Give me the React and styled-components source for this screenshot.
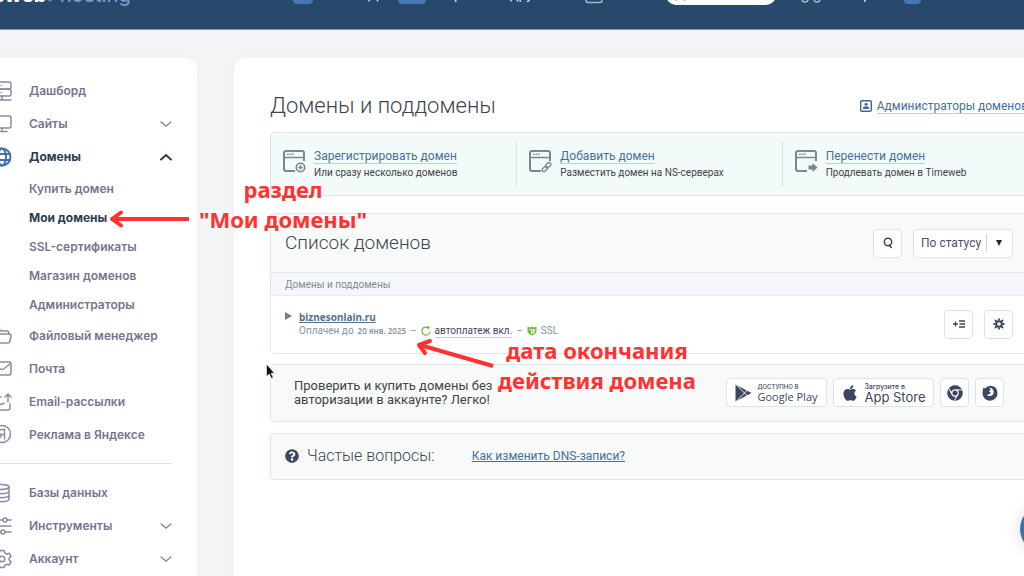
import styled, { createGlobalStyle } from "styled-components"
import { FaApple, FaChrome, FaQuestionCircle } from "react-icons/fa"

const GlobalStyle = createGlobalStyle`
  * {
    box-sizing: border-box;
  }
  body {
    margin: 0;
    overflow: hidden;
    background: #f3f5f7;
    font-family: Roboto, "Liberation Sans", sans-serif;
    color: #3f4347;
  }
`

const Page = styled.div`
  position: relative;
  display: flex;
  flex-direction: column;
  height: 100vh;
  overflow: hidden;
`

/* header */

const Header = styled.header`
  flex: none;
  height: 30px;
  display: flex;
  align-items: flex-end;
  overflow: hidden;
  background: #28496c;
  border-bottom: 1px solid #8093ab;
  color: #dfe7ef;
  font-size: 14px;
  line-height: 16px;
`
const Logo = styled.a`
  width: 288px;
  margin: 0 0 22px -39px;
  flex: none;
  font-family: Inter, sans-serif;
  font-size: 20px;
  font-weight: 800;
  line-height: 24px;
  color: #fff;
  text-decoration: none;
  span {
    font-weight: 500;
    color: #6f9ccb;
  }
`
const HeaderGroup = styled.div`
  display: flex;
  align-items: flex-end;
  flex: none;
  width: ${props => props.$width}px;
  padding-bottom: 25px;
`
const HeaderText = styled.span`
  padding: 0 0 2px ${props => props.$indent || 0}px;
`
const Count = styled.span`
  width: ${props => props.$width}px;
  height: 20px;
  border-radius: 4px;
  background: #4578b4;
`
const Balance = styled.span`
  width: 110px;
  height: 24px;
  padding: 4px 9px;
  margin-bottom: -1px;
  border-radius: 10px;
  background: #fff;
  color: #28496c;
`

/* sidebar */

const Layout = styled.div`
  flex: 1;
  min-height: 0;
  display: flex;
  gap: 37px;
  padding-top: 28px;
`
const Sidebar = styled.nav`
  flex: none;
  width: 237px;
  margin-left: -40px;
  padding: 16px 25px 0 32px;
  border-radius: 12px 12px 0 0;
  background: #fff;
  box-shadow: 0 0 12px #eceff2;
`
const MenuList = styled.ul`
  margin: 0;
  padding: 0;
  list-style: none;
`
const SubList = styled(MenuList)`
  padding: 1px 0 0 37px;
`
const MenuLink = styled.a`
  display: flex;
  align-items: center;
  gap: 17px;
  height: ${props => props.$sub ? 29 : 33}px;
  font-family: Inter, sans-serif;
  font-size: 12px;
  font-weight: ${props => props.$active ? 700 : 600};
  line-height: 16px;
  white-space: nowrap;
  text-decoration: none;
  color: ${props => props.$active ? "#2b3d4f" : "#74768f"};
  span {
    flex: 1;
  }
`
const MenuIcon = styled.svg`
  flex: none;
  width: 20px;
  height: 20px;
  fill: none;
  stroke: ${props => props.$active ? "#3f72ad" : "#8b8ca3"};
  stroke-width: ${props => props.$active ? 2 : 1.5};
  stroke-linecap: round;
  stroke-linejoin: round;
`
const Chevron = styled.svg`
  width: 12px;
  height: 8px;
  fill: none;
  stroke: ${props => props.$active ? "#2b3d4f" : "#8b8ca3"};
  stroke-width: ${props => props.$active ? 2 : 1.5};
  stroke-linecap: round;
`
const Divider = styled.hr`
  height: 1px;
  margin: 12px 0;
  border: 0;
  background: #e0e2e8;
`

/* content */

const Main = styled.main`
  flex: 1;
  min-width: 0;
  margin-right: -40px;
  padding: 33px 36px 0;
  border-radius: 12px 12px 0 0;
  background: #fff;
  box-shadow: 0 0 12px #eceff2;
`
const TitleRow = styled.div`
  display: flex;
  align-items: center;
  justify-content: space-between;
  height: 30px;
  margin-bottom: 11px;
`
const Title = styled.h1`
  margin: 0;
  font-size: 22px;
  font-weight: 300;
  line-height: 30px;
  color: #3c4450;
`
const TextLink = styled.a`
  font-size: 12px;
  line-height: 14px;
  white-space: nowrap;
  text-decoration: none;
  color: #457099;
  border-bottom: 1px solid #b9d0e2;
`
const AdminLink = styled.div`
  display: flex;
  align-items: center;
  gap: 5px;
`
const Box = styled.section`
  border: 1px solid #dde7e9;
  border-radius: 4px;
  background: #f8fafa;
`
const Actions = styled(Box)`
  display: grid;
  grid-template-columns: 246fr 266fr 246fr;
  padding: 9px 0;
  margin-bottom: 17px;
  background: #f3fafa;
`
const Action = styled.div`
  display: flex;
  gap: 8px;
  height: 44px;
  padding: 7px 12px;
  border-left: ${props => props.$first ? 0 : "1px solid #d9e2e4"};
  svg {
    flex: none;
    margin-top: 1px;
  }
`
const ActionText = styled.div`
  display: flex;
  flex-direction: column;
  align-items: flex-start;
  gap: 2px;
`
const Note = styled.span`
  font-size: 10px;
  line-height: 14px;
  white-space: nowrap;
`
const ListBox = styled(Box)`
  margin-bottom: 10px;
`
const ListHead = styled.div`
  display: flex;
  align-items: center;
  gap: 11px;
  height: 58px;
  padding: 0 14px;
`
const SubTitle = styled.h2`
  flex: ${props => props.$grow ? 1 : "none"};
  margin: 0;
  font-size: ${props => props.$size}px;
  font-weight: 300;
  line-height: 24px;
  color: #3c4450;
`
const SquareButton = styled.button`
  display: inline-flex;
  align-items: center;
  justify-content: center;
  width: 29px;
  height: 29px;
  padding: 0;
  border: 1px solid #dbe5e8;
  border-radius: 4px;
  background: #fff;
  color: #3d4660;
`
const Filter = styled.div`
  display: flex;
  align-items: center;
  width: 100px;
  height: 29px;
  padding: 0 8px 0 7px;
  border: 1px solid #dbe5e8;
  border-radius: 4px;
  background: #fff;
  svg {
    margin-left: auto;
    margin-right: 2px;
  }
`
const FilterSelect = styled.select`
  width: 66px;
  height: 18px;
  padding: 0;
  border: 0;
  border-right: 1px solid #cdd8dc;
  appearance: none;
  background: none;
  font-family: inherit;
  font-size: 12px;
  color: #4a5166;
`
const Table = styled.table`
  width: 100%;
  border-collapse: collapse;
  th {
    height: 23px;
    padding: 0 14px;
    border-top: 1px solid #dde7e9;
    border-bottom: 1px solid #e8ecf2;
    background: #f6f7fc;
    font-size: 10px;
    font-weight: 400;
    text-align: left;
    color: #7c8b97;
  }
  td {
    height: 57px;
    padding: 0 14px;
    background: #fff;
  }
`
const Domain = styled.div`
  display: flex;
  align-items: flex-start;
  gap: 7px;
`
const Expand = styled.button`
  display: flex;
  padding: 2px 0;
  border: 0;
  background: none;
`
const DomainName = styled.a`
  display: block;
  width: fit-content;
  font-family: "Noto Sans", sans-serif;
  font-size: 10px;
  font-weight: 700;
  line-height: 14px;
  color: #54708c;
`
const Status = styled.div`
  display: flex;
  align-items: center;
  gap: 4px;
  font-size: 10px;
  line-height: 14px;
  white-space: nowrap;
  color: #8496a0;
  b {
    font-family: "Noto Sans", sans-serif;
    font-size: 8px;
    font-weight: 600;
  }
`
const AutoPay = styled.a`
  line-height: 12px;
  text-decoration: none;
  color: #3f4660;
  border-bottom: 1px solid #c3d2dc;
`
const RowButtons = styled.div`
  display: flex;
  justify-content: flex-end;
  gap: 11px;
`
const Promo = styled(Box)`
  display: flex;
  align-items: center;
  justify-content: space-between;
  height: 58px;
  padding: 0 23px;
  margin-bottom: 11px;
`
const PromoText = styled.p`
  margin: 0;
  font-size: 13px;
  line-height: 14px;
`
const Stores = styled.div`
  display: flex;
  gap: 6px;
`
const StoreButton = styled(SquareButton)`
  width: 101px;
  gap: 5px;
  font-family: ${props => props.$font};
  font-size: ${props => props.$size}px;
  font-weight: ${props => props.$weight};
  line-height: 12px;
  text-align: left;
  white-space: nowrap;
  small {
    display: block;
    font-family: Inter, sans-serif;
    font-size: ${props => props.$small}px;
    font-weight: 500;
    line-height: 8px;
  }
`
const Faq = styled(Box)`
  display: flex;
  align-items: center;
  height: 47px;
  padding: 0 14px;
  color: #3d4660;
  h2 {
    margin: 0 37px 0 8px;
  }
  a {
    border: 0;
    text-decoration: underline;
  }
`
const Chat = styled.button`
  position: absolute;
  top: 505px;
  right: -44px;
  width: 48px;
  height: 48px;
  border: 0;
  border-radius: 50%;
  background: #3f72ad;
  box-shadow: 0 0 16px #d5dbe2;
`

/* notes and arrows drawn over the page */

const Callout = styled.div`
  position: absolute;
  top: ${props => props.$top}px;
  left: ${props => props.$left}px;
  transform: translateX(-50%);
  font-family: "Noto Sans", sans-serif;
  font-size: 22px;
  font-weight: 700;
  line-height: 30px;
  text-align: center;
  white-space: nowrap;
  color: #ff3131;
`
const Marks = styled.svg`
  position: absolute;
  top: 0;
  left: 0;
  pointer-events: none;
`

const icons = {
  server: <><rect x="1" y="1" width="18" height="7" rx="2" /><rect x="1" y="8" width="18" height="7" rx="2" /><path d="M10 15v4M2 19h17M5 4.500h.1M9 4.500h.1M5 11.500h.1M9 11.500h.1" /></>,
  monitor: <><rect x="1" y="2" width="18" height="12" rx="2" /><path d="M10 14v3.500M5 17.500h10" /></>,
  globe: <><circle cx="10" cy="10" r="8.500" /><ellipse cx="10" cy="10" rx="4" ry="8.500" /><path d="M2 7h16M2 13h16" /></>,
  folder: <><path d="M2 8V5q0-2 2-2h3l2 2h6q2 0 2 3" /><path d="M2 8h15q2.500 0 2 2l-1 5q-.4 2-2 2H4q-2 0-2-2z" /></>,
  mail: <><rect x="1" y="3" width="18" height="13" rx="2" /><path d="m2 5 6.500 5q1.500 1 3 0L18 5" /></>,
  send: <><path d="M16 10V2M13 5l3-3 3 3M18 12v4q0 2-2 2H3q-2 0-2-2V7q0-2 2-2h6M4 9l4 3q2 1 4-1" /></>,
  ad: <><circle cx="10" cy="9" r="8.500" /><path d="M12.500 14V4.500H10q-3 0-3 2.500t3 2.500h2.500M10 9.500 7 14" /></>,
  base: <><ellipse cx="9" cy="4" rx="8" ry="2.500" /><path d="M1 4v12c0 3.500 16 3.500 16 0V4M1 8c0 3.500 16 3.500 16 0M1 12c0 3.500 16 3.500 16 0" /></>,
  tools: <><path d="M1 4h10M15 4h4M1 10h18M1 16h8M13 16h6" /><circle cx="13" cy="4" r="2" /><circle cx="11" cy="16" r="2" /></>,
  gear: <><circle cx="10" cy="10" r="2.800" /><path d="m8 1.500-.7 2.300-2 1.200-2.500-.7-1.800 3 1.800 1.800v2L1 13l1.800 3 2.500-.7 2 1.200.7 2h4l.7-2 2-1.200 2.500.7 1.800-3-1.800-1.900v-2L19 7.300l-1.800-3-2.500.7-2-1.200-.7-2.300z" /></>,
}

const topMenu = [
  { icon: "server", label: "Дашборд" },
  { icon: "monitor", label: "Сайты", arrow: true },
  {
    icon: "globe", label: "Домены", arrow: true, active: true,
    sub: ["Купить домен", "Мои домены", "SSL-сертификаты", "Магазин доменов", "Администраторы"],
  },
  { icon: "folder", label: "Файловый менеджер" },
  { icon: "mail", label: "Почта" },
  { icon: "send", label: "Email-рассылки" },
  { icon: "ad", label: "Реклама в Яндексе" },
]

const bottomMenu = [
  { icon: "base", label: "Базы данных" },
  { icon: "tools", label: "Инструменты", arrow: true },
  { icon: "gear", label: "Аккаунт", arrow: true },
]

const actions = [
  { title: "Зарегистрировать домен", note: "Или сразу несколько доменов", mark: "plus" },
  { title: "Добавить домен", note: "Разместить домен на NS-серверах", mark: "link" },
  { title: "Перенести домен", note: "Продлевать домен в Timeweb", mark: "arrow" },
]

function Menu({ items }) {
  return (
    <MenuList>
      {items.map(item => (
        <li key={item.label}>
          <MenuLink href="#" $active={item.active}>
            <MenuIcon viewBox="0 0 20 20" $active={item.active}>{icons[item.icon]}</MenuIcon>
            <span>{item.label}</span>
            {item.arrow && (
              <Chevron viewBox="0 0 12 8" $active={item.active}>
                <path d={item.active ? "M1 6.500 6 2l5 4.500" : "M1 2l5 4 5-4"} />
              </Chevron>
            )}
          </MenuLink>
          {item.sub && (
            <SubList>
              {item.sub.map(label => (
                <li key={label}>
                  <MenuLink href="#" $sub $active={label === "Мои домены"}>{label}</MenuLink>
                </li>
              ))}
            </SubList>
          )}
        </li>
      ))}
    </MenuList>
  )
}

function WindowIcon({ mark }) {
  return (
    <svg width="23" height="23" viewBox="0 0 23 23" fill="none" stroke="#748a92" strokeWidth="2">
      <path d="M12 21H3q-2 0-2-2V3q0-2 2-2h16q2 0 2 2v8" />
      <path d="M1 7.500h20" strokeWidth="1.500" />
      <path d="M4 4.300h7" strokeWidth="1.500" strokeDasharray="1.500 1" />
      {mark === "plus" && <><circle cx="17.500" cy="17.500" r="4.200" strokeWidth="1.600" /><path d="M17.500 15.300v4.400M15.300 17.500h4.400" strokeWidth="1.600" /></>}
      {mark === "link" && <g strokeWidth="1.300"><rect x="16" y="13.500" width="6" height="3.500" rx="1.750" transform="rotate(-45 19 15)" /><rect x="13" y="17" width="6" height="3.500" rx="1.750" transform="rotate(-45 16 19)" /></g>}
      {mark === "arrow" && <path d="M13.500 15.500h4V13l5 4.500-5 4.500v-2.500h-4z" fill="#748a92" stroke="none" />}
    </svg>
  )
}

export default function App() {
  return (
    <>
      <GlobalStyle />
      <Page>
        <Header>
          <Logo href="#">timeweb<span>&gt;hosting</span></Logo>
          <HeaderGroup $width={149}>
            <HeaderText $indent={44} />
            <Count $width={20} />
            <HeaderText $indent={55}>Дни</HeaderText>
          </HeaderGroup>
          <HeaderGroup $width={187}>
            <Count $width={28} />
            <HeaderText $indent={18}>Пригласи друга</HeaderText>
          </HeaderGroup>
          <HeaderGroup $width={81}>
            <svg width="18" height="16" viewBox="0 0 18 16" fill="none" stroke="#a9b9ca" strokeWidth="1.500">
              <rect x="1" y="1" width="16" height="13.500" rx="2" />
            </svg>
          </HeaderGroup>
          <HeaderGroup $width={135}>
            <Balance>Добавить</Balance>
          </HeaderGroup>
          <HeaderGroup $width={103}>
            <svg width="20" height="16" viewBox="0 0 20 16" fill="none" stroke="#a9b9ca" strokeWidth="1.500">
              <circle cx="4" cy="11" r="3" />
              <circle cx="16" cy="11" r="3" />
            </svg>
            <HeaderText $indent={22}>Мир</HeaderText>
          </HeaderGroup>
          <HeaderGroup $width={40}>
            <Count $width={17} />
          </HeaderGroup>
        </Header>

        <Layout>
          <Sidebar>
            <Menu items={topMenu} />
            <Divider />
            <Menu items={bottomMenu} />
          </Sidebar>

          <Main>
            <TitleRow>
              <Title>Домены и поддомены</Title>
              <AdminLink>
                <svg width="12" height="12" viewBox="0 0 12 12" fill="none" stroke="#3f6a94" strokeWidth="1.400">
                  <rect x=".7" y=".7" width="10.600" height="10.600" rx="1" />
                  <circle cx="6" cy="4.300" r="1.500" fill="#3f6a94" stroke="none" />
                  <path d="M3 9V8q0-1.800 3-1.800T9 8v1z" fill="#3f6a94" stroke="none" />
                </svg>
                <TextLink href="#">Администраторы доменов</TextLink>
              </AdminLink>
            </TitleRow>

            <Actions>
              {actions.map((action, i) => (
                <Action key={action.mark} $first={i === 0}>
                  <WindowIcon mark={action.mark} />
                  <ActionText>
                    <TextLink href="#">{action.title}</TextLink>
                    <Note>{action.note}</Note>
                  </ActionText>
                </Action>
              ))}
            </Actions>

            <ListBox>
              <ListHead>
                <SubTitle $grow $size={19}>Список доменов</SubTitle>
                <SquareButton aria-label="Поиск">
                  <svg width="10" height="12" viewBox="0 0 10 12" fill="none" stroke="currentColor" strokeWidth="1.500">
                    <circle cx="5" cy="5" r="3.700" />
                    <path d="m6 7.500 2.500 3.500" />
                  </svg>
                </SquareButton>
                <Filter>
                  <FilterSelect aria-label="Сортировка">
                    <option>По статусу</option>
                  </FilterSelect>
                  <svg width="6" height="6" viewBox="0 0 6 6"><path d="M0 0h6L3 6z" fill="#23282e" /></svg>
                </Filter>
              </ListHead>
              <Table>
                <thead>
                  <tr><th colSpan="2">Домены и поддомены</th></tr>
                </thead>
                <tbody>
                  <tr>
                    <td>
                      <Domain>
                        <Expand aria-label="Развернуть">
                          <svg width="7" height="8" viewBox="0 0 7 8"><path d="M0 0v8l7-4z" fill="#6d828e" /></svg>
                        </Expand>
                        <div>
                          <DomainName href="#">biznesonlain.ru</DomainName>
                          <Status>
                            <span>Оплачен до</span>
                            <b>20 янв. 2025</b>
                            <span>–</span>
                            <svg width="10" height="10" viewBox="0 0 10 10" fill="none" stroke="#7cb944" strokeWidth="1.300">
                              <path d="M4 1.200A4 4 0 1 0 9 5.500M3.500 1.300h4M6 0l2 1.500L6.500 3" />
                            </svg>
                            <AutoPay href="#">автоплатеж вкл.</AutoPay>
                            <span>–</span>
                            <svg width="10" height="10" viewBox="0 0 10 10">
                              <path d="M.5.500 3 1.500 5 .5l2 1L9.500.500V6Q8 9 5 9.500 2 9 .5 6z" fill="#7cb944" />
                              <path d="M2.500 3.500h2v4M6 3.500v4l1.500-2v-2z" fill="none" stroke="#fff" />
                            </svg>
                            <span>SSL</span>
                          </Status>
                        </div>
                      </Domain>
                    </td>
                    <td>
                      <RowButtons>
                        <SquareButton aria-label="Добавить поддомен">
                          <svg width="12" height="8" viewBox="0 0 12 8" fill="none" stroke="currentColor" strokeWidth="1.300">
                            <path d="M0 4h5M2.500 1.500v5M6 1h6M6.500 4H12M6 7h6" />
                          </svg>
                        </SquareButton>
                        <SquareButton aria-label="Настройки">
                          <svg width="12" height="12" viewBox="0 0 12 12" fill="none" stroke="currentColor">
                            <circle cx="6" cy="6" r="2.800" strokeWidth="2" />
                            <path d="M6 .5v2M6 9.500v2M.5 6h2M9.500 6h2M2 2l1.500 1.500M8.500 8.500 10 10M2 10l1.500-1.500M8.500 3.500 10 2" strokeWidth="1.800" />
                          </svg>
                        </SquareButton>
                      </RowButtons>
                    </td>
                  </tr>
                </tbody>
              </Table>
            </ListBox>

            <Promo>
              <PromoText>Проверить и купить домены без<br />авторизации в аккаунте? Легко!</PromoText>
              <Stores>
                <StoreButton $font='"Open Sans", sans-serif' $size={11} $small={6} $weight={500}>
                  <svg width="17" height="18" viewBox="0 0 17 18">
                    <path d="M.5.500 16.500 9 .5 17.500z" fill="#3d4660" />
                    <path d="M1 .5 12.500 12M1 17.500 12.500 6" stroke="#fff" strokeWidth=".9" />
                  </svg>
                  <span><small>ДОСТУПНО В</small>Google Play</span>
                </StoreButton>
                <StoreButton $font="Inter, sans-serif" $size={13} $small={7} $weight={400}>
                  <FaApple size={18} />
                  <span><small>Загрузите в</small>App Store</span>
                </StoreButton>
                <SquareButton aria-label="Chrome"><FaChrome size={16} /></SquareButton>
                <SquareButton aria-label="Firefox">
                  <svg width="16" height="16" viewBox="0 0 16 16">
                    <path d="M1.500 2.500 3 3.500Q5.500.500 9 .7q6.500 1 6.500 7.300A7.500 7.500 0 0 1 .5 8.500q0-3.500 1-6z" fill="#3d4660" />
                    <path d="M7 2.500Q11.500 3 11.700 7q-.2 4-4.200 4-2 0-3-1.500 1.800.500 3.200-.7L9 8q-.5-1.200-2-1 0-1.300 1.500-1.800Q8.500 3.500 7 2.500z" fill="#fff" />
                  </svg>
                </SquareButton>
              </Stores>
            </Promo>

            <Faq>
              <FaQuestionCircle size={14} />
              <SubTitle $size={16}>Частые вопросы:</SubTitle>
              <TextLink href="#">Как изменить DNS-записи?</TextLink>
            </Faq>
          </Main>
        </Layout>

        <Chat aria-label="Чат" />

        <Callout $top={174} $left={283}>раздел<br />"Мои домены"</Callout>
        <Callout $top={335} $left={597}>дата окончания<br />действия домена</Callout>
        <Marks width="520" height="400" viewBox="0 0 520 400" fill="none" stroke="#ff3131" strokeWidth="4">
          <path d="M189 219h-76" />
          <path d="m121 212.500-9 6.500 9 6.500" strokeLinecap="round" strokeLinejoin="round" />
          <path d="m493 366-73-21" />
          <path d="m430 341-11 4 6 8" strokeLinecap="round" strokeLinejoin="round" />
          <path d="M266.500 364v12.500l2.700-2.500 2.300 4.500 1.800-.9-2.200-4.300h3.400z" fill="#111" stroke="#fff" strokeWidth=".6" />
        </Marks>
      </Page>
    </>
  )
}
